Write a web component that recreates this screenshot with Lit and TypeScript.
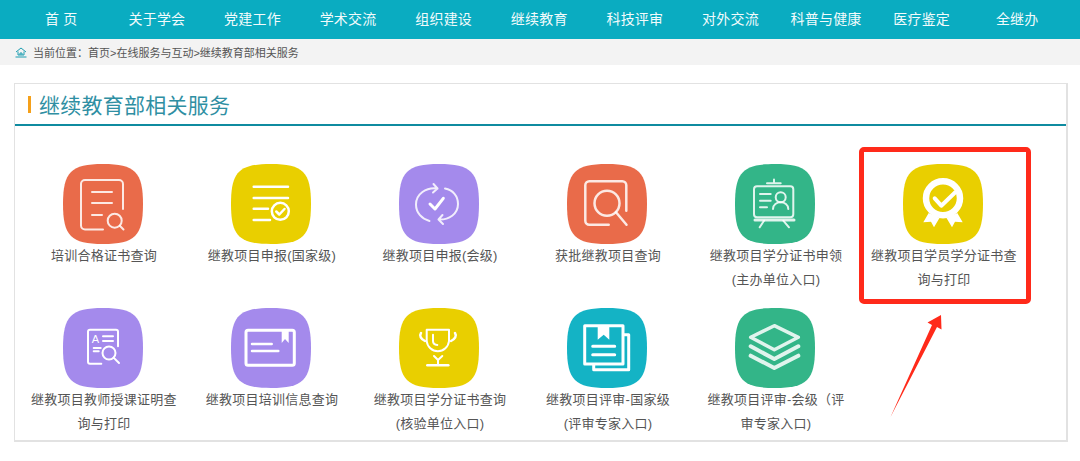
import { LitElement, html, svg, css, type CSSResultGroup } from "lit";
import { customElement } from "lit/decorators.js";

const NAV = ["首 页", "关于学会", "党建工作", "学术交流", "组织建设", "继续教育", "科技评审", "对外交流", "科普与健康", "医疗鉴定", "全继办"];

const ICONS = {
  cert: svg`
    <path d="M40 65.500H22a4 4 0 0 1-4-4V20a4 4 0 0 1 4-4h34a4 4 0 0 1 4 4v25M29 28h20M29 39h20M29 51h10" />
    <circle cx="51.700" cy="56.700" r="7" /><path d="M56.800 61.800L60.500 65.500" />`,
  report: svg`
    <path class="w25" d="M22.700 22.700H57M22.700 34H57M22.700 44.700H37M22.700 56H39" />
    <circle class="w25" cx="49.300" cy="47.300" r="8.500" /><path class="w25" d="M45.300 47.500l3 3 5.200-5.500" />`,
  cycle: svg`
    <path class="soft" d="M38.500 24.500C27 23 17 30 17 40.500C17 49 23 55 30.500 57M34.500 20l4 4.500-4.500 4" />
    <path class="soft" d="M46 24.500C54 26 59 32 59 40C59 50 50 56 39.500 55.500M43.500 51l-4 4.500 4.500 4.500" />
    <path class="w3" d="M31 40l5 5 8.300-10.700" />`,
  search: svg`
    <path class="w25" d="M41.700 60.700H22.300a4 4 0 0 1-4-4V21.300a4 4 0 0 1 4-4h33a4 4 0 0 1 4 4v25.400" />
    <circle class="w25" cx="40" cy="39.300" r="12.500" /><path class="w25" d="M49 48.300L59.500 60.700" />`,
  board: svg`
    <path d="M32 19.300H45.700M39 15.500V19" />
    <rect x="19" y="22.300" width="39.300" height="31" rx="3" />
    <path d="M25 30H35.700M25 36.700H35.700M25 43.300H32" />
    <circle cx="45.700" cy="33.300" r="5" /><path d="M38 45c0-9 15.300-9 15.300 0" />
    <path class="w3" d="M20 56H59" /><path d="M29 56.700L24.700 63.300M48.300 56.700L54 63.300" />`,
  badge: svg`
    <circle class="w65" cx="40" cy="34.300" r="17" /><path class="w4" d="M31.700 34.300l6.600 7.400L52.300 28.300" />
    <path class="solid" d="M25.700 49L20.300 58.300 28 57.700 31 63.200 36.500 54ZM54.300 49L59.700 58.300 52 57.700 49 63.200 43.500 54Z" />`,
  teacher: svg`
    <path d="M38.300 55.700H27a2 2 0 0 1-2-2V23.700a2 2 0 0 1 2-2H53a2 2 0 0 1 2 2V38.300" />
    <text class="letter" x="28.700" y="34.500">A</text>
    <path d="M40 28.300H50M40 33H50M30.700 40H37.700M30.700 43.300H35.700" />
    <circle cx="46" cy="45" r="6.500" /><path d="M50.600 49.600L56 55" />`,
  info: svg`
    <rect class="w3" x="15" y="22.300" width="48.300" height="35" rx="2" />
    <path class="w25" d="M21 36H40.700M21 43H47.300" />
    <path class="solid" d="M50.700 23H57.700V35L54 31 50.700 35Z" />`,
  cup: svg`
    <path d="M27.700 21.700H50V33a11.200 11.200 0 0 1-22.300 0Z" />
    <path class="w25" d="M22 25c-2 3 0 6 4 8M56 25c2 3 0 6-4 8" />
    <path d="M34 26.700V33q0 3.500 4.300 4M35 48l4 4 4.300-4M39 52V57" />
    <path class="w25" d="M28.300 57.300H49.300" />`,
  books: svg`
    <path class="w3" d="M17.700 17.700H56V56H17.700ZM57 26.700H61.700V61.700H26.700V57M25.700 38.300H47.700M25.700 46.700H47.700" />
    <path class="solid" d="M30.700 19H42.300V31.700L36.700 26.700 30.700 31.700Z" />`,
  layers: svg`
    <path class="w35" d="M39.300 17.700L63.300 29.300 39.300 41.700 15.700 29.300Z" />
    <path class="w4" d="M15.700 38.300L39.300 51 63.300 38.300M15.700 47.700L39.300 60 63.300 47.700" />`,
};

const ITEMS: { label: string; color: string; icon: keyof typeof ICONS }[] = [
  { label: "培训合格证书查询", color: "orange", icon: "cert" },
  { label: "继教项目申报(国家级)", color: "yellow", icon: "report" },
  { label: "继教项目申报(会级)", color: "purple", icon: "cycle" },
  { label: "获批继教项目查询", color: "orange", icon: "search" },
  { label: "继教项目学分证书申领\n(主办单位入口)", color: "green", icon: "board" },
  { label: "继教项目学员学分证书查询与打印", color: "yellow", icon: "badge" },
  { label: "继教项目教师授课证明查询与打印", color: "purple", icon: "teacher" },
  { label: "继教项目培训信息查询", color: "purple", icon: "info" },
  { label: "继教项目学分证书查询\n(核验单位入口)", color: "yellow", icon: "cup" },
  { label: "继教项目评审-国家级\n(评审专家入口)", color: "teal", icon: "books" },
  { label: "继教项目评审-会级（评审专家入口)", color: "green", icon: "layers" },
];

@customElement("app-root")
export class AppRoot extends LitElement {
  private renderIcon(item: (typeof ITEMS)[number]) {
    return html`<svg class="icon ${item.color}" viewBox="0 0 80 80" width="80" height="80">
      <path class="tile" d="M40 0C72 0 80 8 80 40S72 80 40 80 0 72 0 40 8 0 40 0Z" />
      ${ICONS[item.icon]}
    </svg>`;
  }

  protected render() {
    return html`
      <nav class="nav">${NAV.map((n) => html`<a>${n}</a>`)}</nav>
      <div class="crumb">
        <svg viewBox="0 0 12 11" width="12" height="11">
          <path d="M1 5L6 1 11 5M3 4.500V8H9V4.500M5 8V6H7V8M0.500 10H11.500" />
        </svg>
        <span>当前位置：首页&gt;在线服务与互动&gt;继续教育部相关服务</span>
      </div>
      <section class="panel">
        <h2 class="head"><i></i>继续教育部相关服务</h2>
        <div class="grid">
          ${ITEMS.map(
            (item) => html`<div class="item">
              ${this.renderIcon(item)}
              <p>${item.label}</p>
            </div>`
          )}
        </div>
      </section>
      <div class="mark"></div>
      <svg class="arrow" viewBox="0 0 60 110" width="60" height="110">
        <path d="M0.500 107L42 15 37.500 12.500 51 5 51.500 19.500 47 17Z" />
      </svg>
    `;
  }

  static get styles(): CSSResultGroup {
    return css`
      :host {
        display: block;
        position: relative;
        height: 461px;
        background: #fff;
        font-family: "Liberation Sans", "Noto Sans CJK SC", sans-serif;
      }
      .nav {
        display: grid;
        grid-template-columns: repeat(11, 95.6px);
        height: 39px;
        padding-left: 13.5px;
        background: #0aacc1;
      }
      .nav a {
        font-size: 14px;
        letter-spacing: 0.2px;
        line-height: 39px;
        text-align: center;
        color: #f2fbfc;
      }
      .crumb {
        display: flex;
        align-items: center;
        gap: 6px;
        height: 26px;
        padding-left: 15px;
        background: #f3f3f3;
        font-size: 11px;
        color: #555;
      }
      .crumb svg {
        fill: none;
        stroke: #1b9db0;
        stroke-width: 1;
      }
      .panel {
        width: 1051px;
        height: 356px;
        margin: 18px 0 0 14px;
        border: 1px solid #e2e2e2;
        border-bottom-width: 2px;
        border-right-width: 2px;
      }
      .head {
        display: flex;
        align-items: center;
        gap: 8px;
        height: 40px;
        margin: 0;
        padding-left: 13px;
        border-bottom: 2px solid #0f8ba0;
        font-size: 21px;
        font-weight: 400;
        letter-spacing: 0.25px;
        color: #2f8fa3;
      }
      .head i {
        width: 3px;
        height: 17px;
        background: #f5a01a;
      }
      .grid {
        display: grid;
        grid-template-columns: repeat(6, 168px);
        grid-auto-rows: 144px;
        padding: 38px 0 0 4px;
      }
      .item {
        display: flex;
        flex-direction: column;
        align-items: center;
      }
      .item p {
        width: 148px;
        margin: 0 0 0 2px;
        font-size: 13px;
        letter-spacing: 0.25px;
        line-height: 24px;
        text-align: center;
        white-space: pre-line;
        color: #555;
      }
      .icon {
        flex-shrink: 0;
        fill: none;
        stroke: #fff;
        stroke-width: 2;
        stroke-linecap: round;
        stroke-linejoin: round;
      }
      .icon .tile {
        stroke: none;
      }
      .orange .tile {
        fill: #e96b4a;
      }
      .yellow .tile {
        fill: #e9cf00;
      }
      .purple .tile {
        fill: #a48aec;
      }
      .green .tile {
        fill: #33b588;
      }
      .teal .tile {
        fill: #14b3c5;
      }
      .orange path:not(.tile),
      .orange circle,
      .green path:not(.tile),
      .green rect,
      .green circle,
      .icon .soft {
        stroke-opacity: 0.85;
      }
      .icon .w25 {
        stroke-width: 2.500;
      }
      .icon .w3 {
        stroke-width: 3;
      }
      .icon .w35 {
        stroke-width: 3.500;
        stroke-linecap: butt;
      }
      .icon .w4 {
        stroke-width: 4;
      }
      .icon .w65 {
        stroke-width: 6.500;
      }
      .icon .solid {
        fill: #fff;
        stroke: none;
      }
      .icon .letter {
        fill: #fff;
        stroke: none;
        font-size: 11px;
      }
      .mark {
        position: absolute;
        left: 859px;
        top: 147px;
        width: 162px;
        height: 147px;
        border: 5px solid #ff2a1a;
        border-radius: 5px;
      }
      .arrow {
        position: absolute;
        left: 890px;
        top: 310px;
        fill: #ff2a1a;
      }
    `;
  }
}
